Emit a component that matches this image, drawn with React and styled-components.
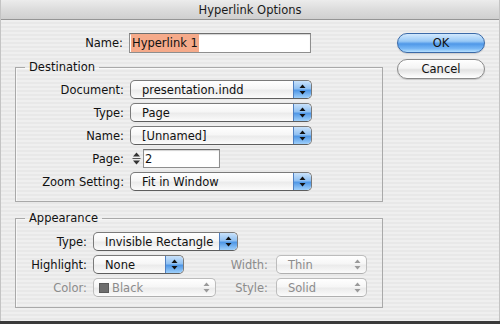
import React from "react";
import styled, { createGlobalStyle } from "styled-components";

const Global = createGlobalStyle`
  html, body { margin: 0; padding: 0; background: #3a3a3a; }
  body { font-family: "DejaVu Sans", "Liberation Sans", sans-serif; font-size: 11.5px; }
`;

const Window = styled.div`
  width: 500px;
  height: 321px;
  box-sizing: border-box;
  display: flex;
  flex-direction: column;
  border-left: 1px solid #c4c4c4;
  border-right: 1px solid #c4c4c4;
  background: repeating-linear-gradient(to bottom, #efefef 0 2px, #e8e8e8 2px 4px);
  color: #111;
  overflow: hidden;
`;

const TitleBar = styled.div`
  height: 20px;
  flex-shrink: 0;
  box-sizing: border-box;
  display: flex;
  align-items: center;
  justify-content: center;
  background: linear-gradient(#ececec, #dcdcdc 50%, #cfcfcf);
  border-bottom: 1px solid #959595;
  color: #1a1a1a;
  font-size: 11.5px;
  padding-top: 1px;
`;

const Body = styled.div`
  display: flex;
  flex-shrink: 0;
  padding: 13px 0 0 14px;
`;

const Main = styled.div`
  width: 368px;
  display: flex;
  flex-direction: column;
`;

const NameRow = styled.div`
  display: grid;
  grid-template-columns: 108px 182px;
  column-gap: 6px;
  align-items: center;
  height: 20px;
`;

const Label = styled.span`
  text-align: right;
  white-space: nowrap;
  color: ${(p) => (p.$disabled ? "#8c8c8c" : "#111")};
  padding-right: ${(p) => p.$pr || 0}px;
`;

const TextBox = styled.div`
  height: ${(p) => p.$h || 20}px;
  box-sizing: border-box;
  border: 1px solid #8e8e8e;
  border-top-color: #6e6e6e;
  box-shadow: inset 0 1px 1px rgba(0, 0, 0, 0.18);
  background: #fff;
  display: flex;
  align-items: center;
  padding: 0 1px;
  width: ${(p) => p.$w}px;
`;

const Selected = styled.span`
  background: #f5aa8a;
  align-self: stretch;
  display: flex;
  align-items: center;
  padding: 0 1px;
`;

const Group = styled.fieldset`
  margin: ${(p) => p.$mt}px 0 0 0;
  border: 1px solid #a9a9a9;
  box-shadow: inset 1px 1px 0 rgba(255, 255, 255, 0.6);
  padding: ${(p) => p.$pt}px 0 10px 0;
  min-width: 0;
`;

const Legend = styled.legend`
  margin-left: 9px;
  padding: 0 4px;
  line-height: 14px;
  color: #111;
`;

const FormGrid = styled.div`
  display: grid;
  grid-template-columns: ${(p) => p.$cols};
  column-gap: 6px;
  row-gap: 4px;
  align-items: center;
  padding-left: ${(p) => p.$pl}px;
`;

const Row = styled.div`
  display: flex;
  align-items: center;
  grid-column: ${(p) => p.$span || "auto"};
`;

const PopupBox = styled.div`
  width: ${(p) => p.$w}px;
  height: 19px;
  box-sizing: border-box;
  display: flex;
  align-items: center;
  border: 1px solid ${(p) => (p.$disabled ? "#bcbcbc" : "#7a7a7a")};
  border-bottom-color: ${(p) => (p.$disabled ? "#b0b0b0" : "#5e5e5e")};
  border-radius: 5px;
  background: linear-gradient(#ffffff, #f6f6f6 45%, #ebebeb 55%, #fbfbfb);
  color: ${(p) => (p.$disabled ? "#8c8c8c" : "#111")};
  overflow: hidden;
  justify-self: start;
`;

const PopupText = styled.span`
  flex: 1;
  padding-left: ${(p) => (p.$swatch ? 5 : 11)}px;
  display: flex;
  align-items: center;
  gap: 3px;
  white-space: nowrap;
`;

const Swatch = styled.span`
  width: 10px;
  height: 10px;
  background: #6e6e6e;
  border: 1px solid #5a5a5a;
  box-sizing: border-box;
`;

const ArrowCell = styled.span`
  width: 17px;
  align-self: stretch;
  display: flex;
  align-items: center;
  justify-content: center;
  border-left: 1px solid ${(p) => (p.$disabled ? "transparent" : "#4f7fc0")};
  border-radius: 0 4px 4px 0;
  background: ${(p) =>
    p.$disabled
      ? "transparent"
      : "linear-gradient(#c9e2fb, #8fc0f2 45%, #4f97e6 55%, #9fd0fb)"};
`;

const Arrows = ({ color }) => (
  <svg width="7" height="11" viewBox="0 0 7 11">
    <path d="M3.5 0.5 L6.5 4 L0.5 4 Z" fill={color} />
    <path d="M3.5 10.5 L6.5 7 L0.5 7 Z" fill={color} />
  </svg>
);

const Popup = ({ w, disabled, swatch, children }) => (
  <PopupBox $w={w} $disabled={disabled}>
    <PopupText $swatch={swatch}>
      {swatch && <Swatch />}
      {children}
    </PopupText>
    <ArrowCell $disabled={disabled}>
      <Arrows color={disabled ? "#9a9a9a" : "#111"} />
    </ArrowCell>
  </PopupBox>
);

const StepperBox = styled.span`
  width: 13px;
  height: 19px;
  display: flex;
  align-items: center;
  justify-content: center;
`;

const Stepper = () => (
  <StepperBox>
    <svg width="9" height="15" viewBox="0 0 9 15">
      <path d="M4.5 1.5 L8 5.5 L1 5.5 Z" fill="#333" />
      <rect x="0.5" y="7" width="8" height="1" fill="#555" />
      <path d="M4.5 13.5 L8 9.5 L1 9.5 Z" fill="#333" />
    </svg>
  </StepperBox>
);

const Buttons = styled.div`
  display: flex;
  flex-direction: column;
  gap: 6px;
  margin-left: 14px;
`;

const PillButton = styled.div`
  width: 88px;
  height: 20px;
  box-sizing: border-box;
  border-radius: 10px;
  display: flex;
  align-items: center;
  justify-content: center;
  color: #111;
  border: 1px solid ${(p) => (p.$primary ? "#3b6aa8" : "#8a8a8a")};
  background: ${(p) =>
    p.$primary
      ? "linear-gradient(#d2e9fd, #99c9f6 40%, #4f98e8 55%, #76b6f5 80%, #b6e0ff)"
      : "linear-gradient(#ffffff, #f4f4f4 45%, #e2e2e2 55%, #f7f7f7 85%, #ffffff)"};
  box-shadow: 0 1px 1px rgba(0, 0, 0, 0.15);
`;

const BottomEdge = styled.div`
  height: 3px;
  background: #3a3a3a;
`;

export default function App() {
  return (
    <>
      <Global />
      <Window>
        <TitleBar>Hyperlink Options</TitleBar>
        <Body>
          <Main>
            <NameRow>
              <Label>Name:</Label>
              <TextBox $w={182}>
                <Selected>Hyperlink 1</Selected>
              </TextBox>
            </NameRow>

            <Group $mt={7} $pt={6}>
              <Legend>Destination</Legend>
              <FormGrid $cols="100px 182px" $pl={8}>
                <Label>Document:</Label>
                <Popup w={182}>presentation.indd</Popup>
                <Label>Type:</Label>
                <Popup w={182}>Page</Popup>
                <Label>Name:</Label>
                <Popup w={182}>[Unnamed]</Popup>
                <Label>Page:</Label>
                <Row>
                  <Stepper />
                  <TextBox $w={77} $h={19}>2</TextBox>
                </Row>
                <Label>Zoom Setting:</Label>
                <Popup w={182}>Fit in Window</Popup>
              </FormGrid>
            </Group>

            <Group $mt={9} $pt={7}>
              <Legend>Appearance</Legend>
              <FormGrid $cols="63px 123px 48px 91px" $pl={8}>
                <Label>Type:</Label>
                <Row $span="2 / 5">
                  <Popup w={145}>Invisible Rectangle</Popup>
                </Row>
                <Label>Highlight:</Label>
                <Popup w={91}>None</Popup>
                <Label $disabled $pr={2}>Width:</Label>
                <Popup w={91} disabled>Thin</Popup>
                <Label $disabled>Color:</Label>
                <Popup w={123} disabled swatch>Black</Popup>
                <Label $disabled $pr={2}>Style:</Label>
                <Popup w={91} disabled>Solid</Popup>
              </FormGrid>
            </Group>
          </Main>
          <Buttons>
            <PillButton $primary>OK</PillButton>
            <PillButton>Cancel</PillButton>
          </Buttons>
        </Body>
      </Window>
      <BottomEdge />
    </>
  );
}
